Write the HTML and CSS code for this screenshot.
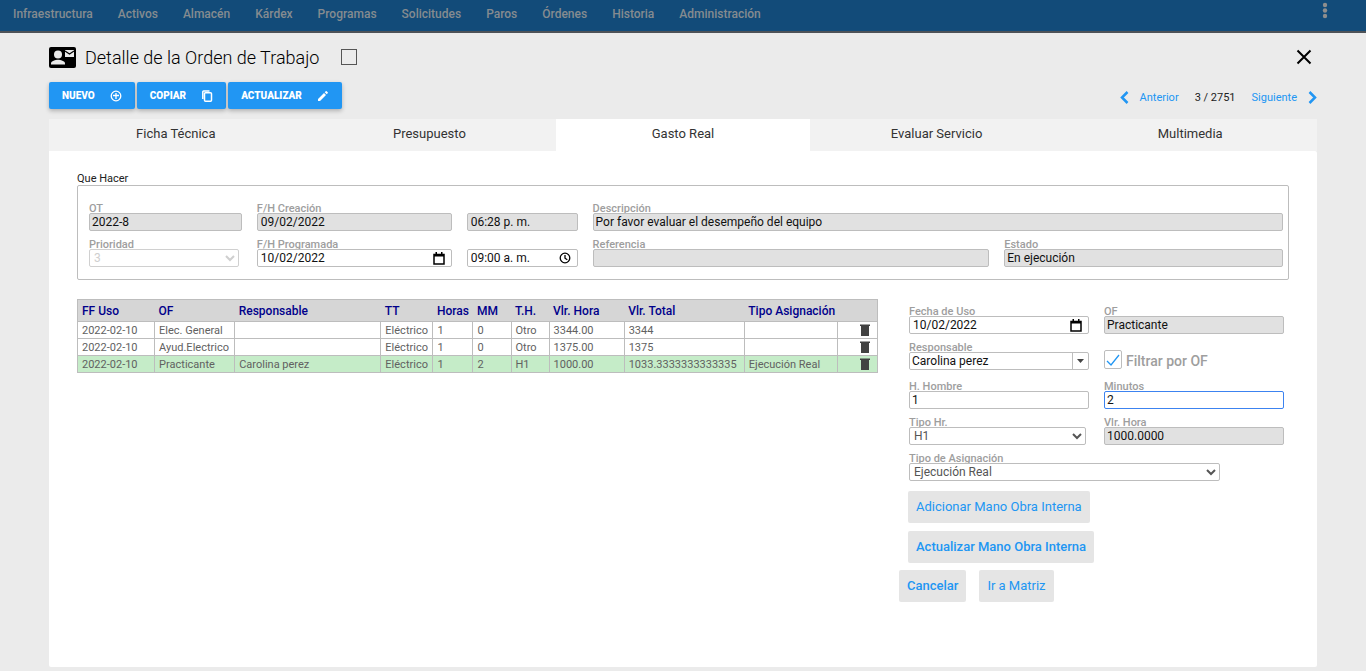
FILE: index.html
```html
<!DOCTYPE html>
<html lang="es">
<head>
    <meta charset="UTF-8">
    <meta name="viewport" content="width=device-width, initial-scale=1.0">
    <title>Detalle de la Orden de Trabajo</title>
    <link rel="stylesheet" href="styles.css">
</head>
<body>
    <nav class="navbar">
        <div class="nav-links">
            <a href="#">Infraestructura</a>
            <a href="#">Activos</a>
            <a href="#">Almacén</a>
            <a href="#">Kárdex</a>
            <a href="#">Programas</a>
            <a href="#">Solicitudes</a>
            <a href="#">Paros</a>
            <a href="#">Órdenes</a>
            <a href="#">Historia</a>
            <a href="#">Administración</a>
        </div>
        <button class="menu-btn" aria-label="Menú">
            <svg width="6" height="18" viewBox="0 0 6 18" fill="#8e8e8e"><circle cx="3" cy="3" r="2.2"/><circle cx="3" cy="8.5" r="2.2"/><circle cx="3" cy="14" r="2.2"/></svg>
        </button>
    </nav>

    <main class="detail">
        <header class="detail-head">
            <svg width="27" height="21" viewBox="0 0 27 21">
                <rect width="27" height="21" rx="2" fill="#000"/>
                <circle cx="9" cy="7.5" r="4" fill="#ebebeb"/>
                <path d="M2 17.500v-1.200c0-2.400 4.600-3.600 7-3.600s7 1.200 7 3.600v1.200z" fill="#ebebeb"/>
                <rect x="16" y="3" width="9" height="7" fill="#ebebeb"/>
                <path d="M16 4l4.500 3L25 4" fill="none" stroke="#000" stroke-width="1.100"/>
            </svg>
            <h1>Detalle de la Orden de Trabajo</h1>
            <input type="checkbox" class="box" aria-label="Seleccionar orden">
            <button class="close-btn" aria-label="Cerrar">
                <svg width="16" height="16" viewBox="0 0 16 16" stroke="#000" stroke-width="2"><path d="M1.500 1.500l13 13M14.500 1.500l-13 13"/></svg>
            </button>
        </header>

        <div class="toolbar">
            <button class="action">NUEVO
                <svg width="12" height="12" viewBox="0 0 12 12" fill="none" stroke="#fff" stroke-width="1.300"><circle cx="6" cy="6" r="4.800"/><path d="M6 3v6M3 5.500h6"/></svg>
            </button>
            <button class="action">COPIAR
                <svg width="12" height="12" viewBox="0 0 12 12" fill="none" stroke="#fff" stroke-width="1.500"><path d="M1.800 9V1.800q0-.8.8-.8h5.900"/><rect x="3.500" y="2.800" width="7" height="8.400" rx="1"/></svg>
            </button>
            <button class="action">ACTUALIZAR
                <svg width="12" height="12" viewBox="0 0 12 12" fill="#fff"><path d="M1 9v2h2l6-6-2-2zM7.700 2.300l2 2 1-1q.5-.5 0-1l-1-1q-.5-.5-1 0z"/></svg>
            </button>
            <div class="pager">
                <a href="#"><svg width="9" height="13" viewBox="0 0 9 13" fill="none" stroke="#2196f3" stroke-width="2.500"><path d="M7.500 1L2 6.500 7.500 12"/></svg>Anterior</a>
                <span>3 / 2751</span>
                <a href="#">Siguiente<svg width="9" height="13" viewBox="0 0 9 13" fill="none" stroke="#2196f3" stroke-width="2.500"><path d="M1.500 1L7 6.500 1.500 12"/></svg></a>
            </div>
        </div>

        <div class="tabs" role="tablist">
            <button role="tab">Ficha Técnica</button>
            <button role="tab">Presupuesto</button>
            <button role="tab" class="active" aria-selected="true">Gasto Real</button>
            <button role="tab">Evaluar Servicio</button>
            <button role="tab">Multimedia</button>
        </div>

        <section class="panel">
            <h2>Que Hacer</h2>
            <div class="order">
                <div class="field">
                    <label for="ot">OT</label>
                    <input id="ot" type="text" value="2022-8" readonly>
                </div>
                <div class="field">
                    <label for="creacion">F/H Creación</label>
                    <input id="creacion" class="date" type="text" value="09/02/2022" readonly>
                </div>
                <div class="field">
                    <input class="date" type="text" value="06:28 p. m." aria-label="Hora de creación" readonly>
                </div>
                <div class="field wide">
                    <label for="descripcion">Descripción</label>
                    <input id="descripcion" type="text" value="Por favor evaluar el desempeño del equipo" readonly>
                </div>
                <div class="field priority">
                    <label for="prioridad">Prioridad</label>
                    <select id="prioridad" disabled><option>3</option></select>
                </div>
                <div class="field">
                    <label for="programada">F/H Programada</label>
                    <div class="picker">
                        <input id="programada" class="date" type="text" value="10/02/2022">
                        <button aria-label="Abrir calendario"><svg width="12" height="13" viewBox="0 0 12 13"><path d="M1 2.500h10v9.500H1z" fill="none" stroke="#000" stroke-width="1.500"/><path d="M1 2h10v2.500H1zM2.500 0H4v2H2.500zM8 0h1.500v2H8z"/></svg></button>
                    </div>
                </div>
                <div class="field">
                    <div class="picker">
                        <input class="date" type="text" value="09:00 a. m." aria-label="Hora programada">
                        <button aria-label="Elegir hora"><svg width="12" height="12" viewBox="0 0 12 12" fill="none" stroke="#000" stroke-width="1.300"><circle cx="6" cy="6" r="4.800"/><path d="M6 3v3.200l2.300 1.500"/></svg></button>
                    </div>
                </div>
                <div class="field">
                    <label for="referencia">Referencia</label>
                    <input id="referencia" type="text" readonly>
                </div>
                <div class="field">
                    <label for="estado">Estado</label>
                    <input id="estado" type="text" value="En ejecución" readonly>
                </div>
            </div>

            <div class="costs">
                <div class="table-wrap">
                    <table>
                        <colgroup>
                            <col class="c-date"><col class="c-of"><col class="c-resp"><col class="c-tt"><col class="c-num"><col class="c-th"><col class="c-th"><col class="c-hour"><col class="c-total"><col class="c-type"><col class="c-del">
                        </colgroup>
                        <thead>
                            <tr><th>FF Uso</th><th>OF</th><th>Responsable</th><th>TT</th><th>Horas</th><th>MM</th><th>T.H.</th><th>Vlr. Hora</th><th>Vlr. Total</th><th>Tipo Asignación</th><th></th></tr>
                        </thead>
                        <tbody>
                            <tr><td>2022-02-10</td><td>Elec. General</td><td></td><td>Eléctrico</td><td>1</td><td>0</td><td>Otro</td><td>3344.00</td><td>3344</td><td></td><td><button class="trash" aria-label="Eliminar"><svg width="10" height="12" viewBox="0 0 10 12" fill="#424242"><path d="M0 0.500h10V2H0zM1 2h8V12H1z"/></svg></button></td></tr>
                            <tr><td>2022-02-10</td><td>Ayud.Electrico</td><td></td><td>Eléctrico</td><td>1</td><td>0</td><td>Otro</td><td>1375.00</td><td>1375</td><td></td><td><button class="trash" aria-label="Eliminar"><svg width="10" height="12" viewBox="0 0 10 12" fill="#424242"><path d="M0 0.500h10V2H0zM1 2h8V12H1z"/></svg></button></td></tr>
                            <tr class="selected"><td>2022-02-10</td><td>Practicante</td><td>Carolina perez</td><td>Eléctrico</td><td>1</td><td>2</td><td>H1</td><td>1000.00</td><td>1033.3333333333335</td><td>Ejecución Real</td><td><button class="trash" aria-label="Eliminar"><svg width="10" height="12" viewBox="0 0 10 12" fill="#424242"><path d="M0 0.500h10V2H0zM1 2h8V12H1z"/></svg></button></td></tr>
                        </tbody>
                    </table>
                </div>

                <form class="labor">
                    <div class="labor-grid">
                        <div class="field">
                            <label for="fecha-uso">Fecha de Uso</label>
                            <div class="picker">
                                <input id="fecha-uso" class="date" type="text" value="10/02/2022">
                                <button type="button" aria-label="Abrir calendario"><svg width="12" height="13" viewBox="0 0 12 13"><path d="M1 2.500h10v9.500H1z" fill="none" stroke="#000" stroke-width="1.500"/><path d="M1 2h10v2.500H1zM2.500 0H4v2H2.500zM8 0h1.500v2H8z"/></svg></button>
                            </div>
                        </div>
                        <div class="field">
                            <label for="of">OF</label>
                            <input id="of" type="text" value="Practicante" readonly>
                        </div>
                        <div class="field resp">
                            <label for="responsable">Responsable</label>
                            <div class="picker combo">
                                <input id="responsable" type="text" value="Carolina perez">
                                <button type="button" aria-label="Ver responsables"><svg width="7" height="4" viewBox="0 0 7 4"><path d="M0 0h7L3.500 4z" fill="#444"/></svg></button>
                            </div>
                        </div>
                        <div class="filter">
                            <input type="checkbox" class="box" id="filtrar" checked>
                            <label for="filtrar">Filtrar por OF</label>
                        </div>
                        <div class="field">
                            <label for="horas">H. Hombre</label>
                            <input id="horas" type="text" value="1">
                        </div>
                        <div class="field">
                            <label for="minutos">Minutos</label>
                            <input id="minutos" type="text" value="2">
                        </div>
                        <div class="field tipo-hr">
                            <label for="tipo-hr">Tipo Hr.</label>
                            <select id="tipo-hr"><option>H1</option></select>
                        </div>
                        <div class="field">
                            <label for="vlr-hora">Vlr. Hora</label>
                            <input id="vlr-hora" type="text" value="1000.0000" readonly>
                        </div>
                        <div class="field asignacion">
                            <label for="asignacion">Tipo de Asignación</label>
                            <select id="asignacion"><option>Ejecución Real</option></select>
                        </div>
                    </div>
                    <div class="stack">
                        <button type="button" class="flat">Adicionar Mano Obra Interna</button>
                        <button type="button" class="flat strong">Actualizar Mano Obra Interna</button>
                    </div>
                    <div class="row">
                        <button type="button" class="flat strong">Cancelar</button>
                        <button type="button" class="flat">Ir a Matriz</button>
                    </div>
                </form>
            </div>
        </section>
    </main>

    <script>
        const minutos = document.getElementById('minutos');
        minutos.focus();
        minutos.setSelectionRange(1, 1);
    </script>
</body>
</html>
```
FILE: styles.css
```css
* {
    box-sizing: border-box;
}
body {
    margin: 0;
    min-height: 100vh;
    display: flex;
    flex-direction: column;
    background-color: #ebebeb;
    color: #212121;
    font-family: Roboto, sans-serif;
    font-size: 12px;
}
button, input, select {
    font-family: inherit;
    font-size: 12px;
    margin: 0;
}
button {
    border: none;
    background: none;
    padding: 0;
    cursor: pointer;
}
svg {
    display: block;
    flex: none;
}
a {
    text-decoration: none;
}

/* Top menu */
.navbar {
    display: flex;
    justify-content: space-between;
    height: 33px;
    padding: 0 38px 0 13px;
    background-color: #124b79;
    border-bottom: 2px solid #4d5257;
}
.nav-links {
    display: flex;
    gap: 25px;
    line-height: 28px;
}
.nav-links a {
    color: #858b90;
    font-weight: 500;
}
.menu-btn {
    align-self: flex-start;
    padding-top: 2px;
}

.detail {
    flex: 1;
    display: flex;
    flex-direction: column;
    padding: 11px 49px 4px;
}
.detail-head {
    display: flex;
    align-items: center;
    height: 26px;
}
.detail-head h1 {
    margin: 0 22px 0 9px;
    color: #000;
    font-size: 18px;
    font-weight: 300;
}
.box {
    appearance: none;
    width: 16px;
    height: 16px;
    border: 1px solid #555;
}
.close-btn {
    margin-left: auto;
    margin-right: 5px;
}

.toolbar {
    display: flex;
    gap: 2px;
    padding: 12px 0 10px;
}
.action {
    display: flex;
    align-items: center;
    gap: 15px;
    height: 27px;
    padding: 0 13px;
    background-color: #2196f3;
    color: white;
    font-size: 10px;
    font-weight: 900;
    border-radius: 2px;
    box-shadow: 0 2px 4px rgba(0, 0, 0, 0.25);
}
.pager {
    display: flex;
    align-items: center;
    margin-left: auto;
    gap: 16px;
    padding-top: 4px;
    font-size: 11px;
}
.pager a {
    display: flex;
    align-items: center;
    gap: 11px;
    color: #2196f3;
}

.tabs {
    display: grid;
    grid-template-columns: repeat(5, 1fr);
}
.tabs button {
    height: 32px;
    padding-bottom: 4px;
    background-color: #f2f2f2;
    color: #333;
    font-size: 13px;
}
.tabs .active {
    background-color: white;
}

.panel {
    flex: 1;
    padding: 22px 28px;
    background-color: white;
    border-radius: 0 2px 2px 2px;
}
.panel h2 {
    margin: 0;
    font-size: 11px;
    font-weight: 400;
    line-height: 12px;
}

/* Form fields */
.order {
    display: grid;
    grid-template-columns: 153fr 195fr 111fr 397fr 279fr;
    gap: 7px 15px;
    padding: 16px 5px 12px 11px;
    border: 1px solid #bdbdbd;
    border-radius: 2px;
}
.field {
    display: flex;
    flex-direction: column;
    justify-content: flex-end;
    min-width: 0;
}
.field label {
    padding-top: 2px;
    color: #9e9e9e;
    font-size: 11px;
    font-weight: 500;
    line-height: 9px;
}
.wide {
    grid-column: span 2;
}
.priority {
    padding-right: 3px;
}
.field input, .field select {
    width: 100%;
    height: 18px;
    padding: 0 2px;
    border: 1px solid #bdbdbd;
    border-radius: 2px;
    background-color: white;
    color: #111;
    outline: none;
}
.field select {
    padding: 0;
    color: #555;
}
.field input:read-only {
    background-color: #e1e1e1;
}
.field select:disabled {
    color: #bbb;
    opacity: 0.7;
}
.field input.date {
    padding: 0 3px;
}
.field input:focus {
    border-color: #3c83f0;
}
.picker {
    display: flex;
    height: 18px;
    border: 1px solid #bdbdbd;
    border-radius: 2px;
}
.field .picker input {
    flex: 1;
    min-width: 0;
    height: 16px;
    border: none;
}
.picker button {
    padding: 0 6px;
}
.combo button {
    padding: 0 4px;
    border-left: 1px solid #bdbdbd;
}

/* Costs table and labor form */
.costs {
    display: flex;
    gap: 21px;
    padding-top: 19px;
}
.table-wrap {
    flex: 1;
}
table {
    width: 100%;
    table-layout: fixed;
    border-collapse: collapse;
    border: 1px solid #bdbdbd;
}
th {
    height: 22px;
    padding: 1px 0 0 4px;
    background-color: #d6d6d6;
    color: #00008b;
    font-weight: 500;
    text-align: left;
    white-space: nowrap;
}
td {
    height: 17px;
    padding: 0 0 0 4px;
    border: 1px solid #bdbdbd;
    color: #616161;
    font-size: 11px;
    line-height: 15px;
    white-space: nowrap;
}
.selected {
    background-color: #c5ecc8;
}
.c-date { width: 77px; }
.c-of { width: 80px; }
.c-resp { width: 146px; }
.c-tt { width: 52px; }
.c-num { width: 40px; }
.c-th { width: 38px; }
.c-hour { width: 75px; }
.c-total { width: 120px; }
.c-type { width: 93px; }
.c-del { width: 40px; }
.trash {
    display: block;
    margin-left: auto;
    margin-right: 7px;
}

.labor {
    width: 390px;
    padding-top: 6px;
}
.labor-grid {
    display: grid;
    grid-template-columns: 1fr 1fr;
    gap: 7px 15px;
    padding: 0 5px 10px 10px;
}
.resp {
    padding-bottom: 3px;
}
.tipo-hr {
    padding-right: 3px;
}
.asignacion {
    grid-column: span 2;
    padding-right: 64px;
}
.filter {
    display: flex;
    align-items: flex-end;
    gap: 4px;
    padding-bottom: 4px;
}
.filter label {
    color: #9e9e9e;
    font-size: 14px;
    font-weight: 500;
}
.filter .box {
    width: 18px;
    height: 19px;
    border-color: #bdbdbd;
    border-radius: 2px;
}
.box:checked {
    background: url('data:image/svg+xml,<svg xmlns="http://www.w3.org/2000/svg" width="16" height="16"><path d="M2 9l4 4 8-10" fill="none" stroke="%232196f3" stroke-width="1.300"/></svg>') center no-repeat;
}
.flat {
    height: 32px;
    padding: 0 8px 2px;
    background-color: #e5e5e5;
    color: #2196f3;
    font-size: 13px;
    font-weight: 400;
    border-radius: 2px;
}
.strong {
    font-weight: 500;
}
.stack {
    display: flex;
    flex-direction: column;
    align-items: flex-start;
    gap: 8px;
    padding-left: 9px;
}
.row {
    display: flex;
    gap: 13px;
    padding-top: 7px;
}
```
